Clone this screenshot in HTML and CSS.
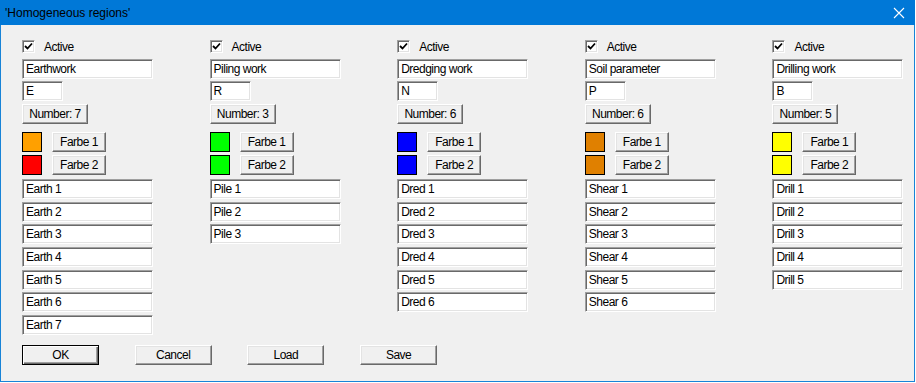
FILE: index.html
```html
<!DOCTYPE html>
<html lang="en">
<head>
  <meta charset="UTF-8" />
  <title>'Homogeneous regions'</title>
  <link rel="stylesheet" href="styles.css">
</head>
<body>
  <div class="window">
    <div class="titlebar">
      <span class="title">'Homogeneous regions'</span>
      <svg class="close" width="12" height="12" viewBox="0 0 12 12">
        <path d="M1 1 L11 11 M11 1 L1 11" stroke="#fff" stroke-width="1.1" fill="none"/>
      </svg>
    </div>

    <div class="content">
      <div class="columns">

        <div class="col">
          <div class="check-row"><span class="check"><svg width="9" height="9" viewBox="0 0 9 9"><path d="M1 4 L3.5 6.5 L8 1.5" stroke="#000" stroke-width="1.8" fill="none"/></svg></span>Active</div>
          <div class="field name">Earthwork</div>
          <div class="field abbr">E</div>
          <div class="btn number">Number: 7</div>
          <div class="color-row"><span class="swatch" style="background:#ffa000"></span><div class="btn farbe">Farbe 1</div></div>
          <div class="color-row"><span class="swatch" style="background:#ff0000"></span><div class="btn farbe">Farbe 2</div></div>
          <div class="list">
            <div class="field">Earth 1</div>
            <div class="field">Earth 2</div>
            <div class="field">Earth 3</div>
            <div class="field">Earth 4</div>
            <div class="field">Earth 5</div>
            <div class="field">Earth 6</div>
            <div class="field">Earth 7</div>
          </div>
        </div>

        <div class="col">
          <div class="check-row"><span class="check"><svg width="9" height="9" viewBox="0 0 9 9"><path d="M1 4 L3.5 6.5 L8 1.5" stroke="#000" stroke-width="1.8" fill="none"/></svg></span>Active</div>
          <div class="field name">Piling work</div>
          <div class="field abbr">R</div>
          <div class="btn number">Number: 3</div>
          <div class="color-row"><span class="swatch" style="background:#00ff00"></span><div class="btn farbe">Farbe 1</div></div>
          <div class="color-row"><span class="swatch" style="background:#00ff00"></span><div class="btn farbe">Farbe 2</div></div>
          <div class="list">
            <div class="field">Pile 1</div>
            <div class="field">Pile 2</div>
            <div class="field">Pile 3</div>
          </div>
        </div>

        <div class="col">
          <div class="check-row"><span class="check"><svg width="9" height="9" viewBox="0 0 9 9"><path d="M1 4 L3.5 6.5 L8 1.5" stroke="#000" stroke-width="1.8" fill="none"/></svg></span>Active</div>
          <div class="field name">Dredging work</div>
          <div class="field abbr">N</div>
          <div class="btn number">Number: 6</div>
          <div class="color-row"><span class="swatch" style="background:#0000ff"></span><div class="btn farbe">Farbe 1</div></div>
          <div class="color-row"><span class="swatch" style="background:#0000ff"></span><div class="btn farbe">Farbe 2</div></div>
          <div class="list">
            <div class="field">Dred 1</div>
            <div class="field">Dred 2</div>
            <div class="field">Dred 3</div>
            <div class="field">Dred 4</div>
            <div class="field">Dred 5</div>
            <div class="field">Dred 6</div>
          </div>
        </div>

        <div class="col">
          <div class="check-row"><span class="check"><svg width="9" height="9" viewBox="0 0 9 9"><path d="M1 4 L3.5 6.5 L8 1.5" stroke="#000" stroke-width="1.8" fill="none"/></svg></span>Active</div>
          <div class="field name">Soil parameter</div>
          <div class="field abbr">P</div>
          <div class="btn number">Number: 6</div>
          <div class="color-row"><span class="swatch" style="background:#e08000"></span><div class="btn farbe">Farbe 1</div></div>
          <div class="color-row"><span class="swatch" style="background:#e08000"></span><div class="btn farbe">Farbe 2</div></div>
          <div class="list">
            <div class="field">Shear 1</div>
            <div class="field">Shear 2</div>
            <div class="field">Shear 3</div>
            <div class="field">Shear 4</div>
            <div class="field">Shear 5</div>
            <div class="field">Shear 6</div>
          </div>
        </div>

        <div class="col">
          <div class="check-row"><span class="check"><svg width="9" height="9" viewBox="0 0 9 9"><path d="M1 4 L3.5 6.5 L8 1.5" stroke="#000" stroke-width="1.8" fill="none"/></svg></span>Active</div>
          <div class="field name">Drilling work</div>
          <div class="field abbr">B</div>
          <div class="btn number">Number: 5</div>
          <div class="color-row"><span class="swatch" style="background:#ffff00"></span><div class="btn farbe">Farbe 1</div></div>
          <div class="color-row"><span class="swatch" style="background:#ffff00"></span><div class="btn farbe">Farbe 2</div></div>
          <div class="list">
            <div class="field">Drill 1</div>
            <div class="field">Drill 2</div>
            <div class="field">Drill 3</div>
            <div class="field">Drill 4</div>
            <div class="field">Drill 5</div>
          </div>
        </div>

      </div>

      <div class="actions">
        <div class="btn action default">OK</div>
        <div class="btn action">Cancel</div>
        <div class="btn action">Load</div>
        <div class="btn action">Save</div>
      </div>
    </div>
  </div>
</body>
</html>
```

FILE: styles.css
```css
body {
  margin: 0;
  background: #ffffff;
  font-family: "Liberation Sans", Arial, sans-serif;
  font-size: 12px;
  letter-spacing: -0.5px;
  color: #000;
}

.window {
  width: 915px;
  height: 382px;
  box-sizing: border-box;
  border: 1px solid #1883d7;
  border-top: none;
  background: #f0f0f0;
}

.titlebar {
  height: 25px;
  margin: 0 -1px;
  background: #0078d7;
  display: flex;
  align-items: center;
  justify-content: space-between;
  padding: 0 10px 0 5px;
}

.title {
  font-size: 12px;
  letter-spacing: 0;
  color: #000;
}

.close {
  margin-top: 1px;
}

.content {
  padding: 15px 0 0 21px;
}

.columns {
  display: grid;
  grid-template-columns: repeat(5, 187.6px);
}

.col {
  display: flex;
  flex-direction: column;
  align-items: flex-start;
}

.check-row {
  height: 13px;
  display: flex;
  align-items: center;
  gap: 9px;
}

.check {
  width: 13px;
  height: 13px;
  box-sizing: border-box;
  background: #fff;
  border: 1px solid;
  border-color: #a0a0a0 #fff #fff #a0a0a0;
  box-shadow: inset 1px 1px #696969, inset -1px -1px #e3e3e3;
  display: flex;
  align-items: center;
  justify-content: center;
}

.field {
  width: 131px;
  height: 20px;
  box-sizing: border-box;
  background: #fff;
  border: 1px solid;
  border-color: #a0a0a0 #fff #fff #a0a0a0;
  box-shadow: inset 1px 1px #696969, inset -1px -1px #e3e3e3;
  padding-left: 3px;
  line-height: 19px;
  white-space: nowrap;
}

.name {
  margin-top: 6px;
}

.abbr {
  width: 41px;
  margin-top: 2px;
}

.btn {
  height: 20px;
  box-sizing: border-box;
  background: #f0f0f0;
  border: 1px solid;
  border-color: #fff #696969 #696969 #fff;
  box-shadow: inset -1px -1px #a0a0a0, inset 1px 1px #e3e3e3;
  display: flex;
  align-items: center;
  justify-content: center;
  white-space: nowrap;
}

.number {
  width: 66px;
  margin-top: 3px;
}

.color-row {
  display: flex;
  gap: 10px;
  margin-top: 3px;
}

.number + .color-row {
  margin-top: 8px;
}

.swatch {
  width: 20px;
  height: 20px;
  box-sizing: border-box;
  border: 1px solid #000;
}

.farbe {
  width: 54px;
}

.list {
  display: flex;
  flex-direction: column;
  gap: 2.67px;
  margin-top: 4px;
}

.actions {
  display: flex;
  gap: 35.7px;
  margin-top: 10px;
}

.action {
  width: 77px;
}

.default {
  border: 1px solid #000;
  box-shadow: inset 1px 1px #fff, inset -1px -1px #696969, inset -2px -2px #a0a0a0;
}
```
